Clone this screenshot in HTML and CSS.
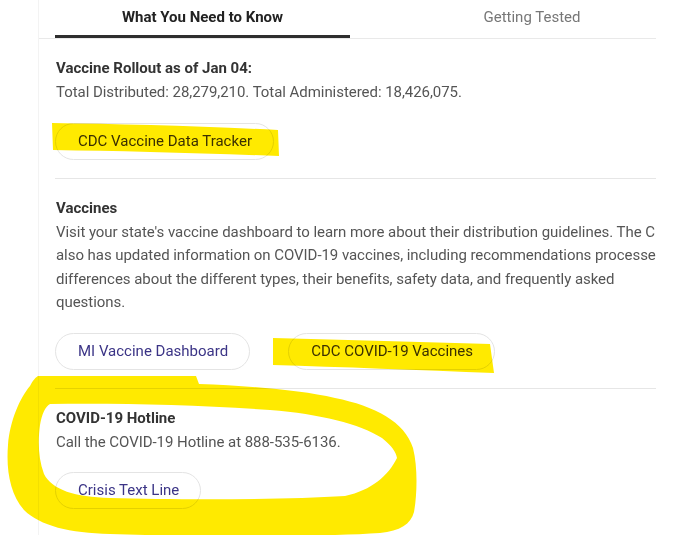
FILE: index.html
```html
<!DOCTYPE html>
<html lang="en">
<head>
<meta charset="utf-8">
<title>COVID-19 Info</title>
<link rel="stylesheet" href="styles.css">
</head>
<body>
<div class="page">
  <div class="card">
    <div class="tabs">
      <div class="tab active">What You Need to Know</div>
      <div class="tab muted">Getting Tested</div>
    </div>
    <section class="sec">
      <h3 class="title">Vaccine Rollout as of Jan 04:</h3>
      <p class="text">Total Distributed: 28,279,210. Total Administered: 18,426,075.</p>
      <div class="btns"><a class="pill">CDC Vaccine Data Tracker</a></div>
    </section>
    <section class="sec">
      <h3 class="title">Vaccines</h3>
      <p class="text">Visit your state's vaccine dashboard to learn more about their distribution guidelines. The CDC<br>also has updated information on COVID-19 vaccines, including recommendations processes and<br>differences about the different types, their benefits, safety data, and frequently asked<br>questions.</p>
      <div class="btns"><a class="pill">MI Vaccine Dashboard</a><a class="pill">CDC COVID-19 Vaccines</a></div>
    </section>
    <section class="sec last">
      <h3 class="title">COVID-19 Hotline</h3>
      <p class="text">Call the COVID-19 Hotline at 888-535-6136.</p>
      <div class="btns"><a class="pill">Crisis Text Line</a></div>
    </section>
  </div>
  <svg class="marker" width="673" height="535" viewBox="0 0 673 535" aria-hidden="true">
    <path fill="#ffea00" d="M52,123 C120,124 200,126 278,130 L279,156 C200,153 120,151 53,150 Z"/>
    <path fill="#ffea00" d="M273,338 C350,340 420,342 490,344 L494,373 C420,370 340,367 273,365 Z"/>
    <path fill="#ffea00" fill-rule="evenodd" d="M38,376 L196,376 L199,384 C250,386 300,390 335,398 C375,406 405,422 413,448 C418,468 417,495 414,512 C411,524 400,531 380,533 C320,537 200,537 110,534 C70,533 40,526 24,510 C10,494 6,470 8,445 C10,420 20,398 30,386 C33,380 36,377 38,376 Z M50,404 C120,403 200,405 270,410 C320,414 360,424 382,438 C392,446 396,452 397,458 C388,476 372,490 345,496 C280,500 180,500 110,498 C75,497 52,490 44,474 C38,458 38,440 40,425 C42,414 45,407 50,404 Z"/>
  </svg>
</div>
</body>
</html>
```
FILE: styles.css
```css
html, body {
  margin: 0;
  padding: 0;
  background: #ffffff;
}
body {
  font-family: Roboto, "Liberation Sans", Arial, sans-serif;
}
.page {
  position: relative;
  width: 673px;
  height: 535px;
  overflow: hidden;
}
.card {
  margin-left: 38px;
  width: 618px;
  height: 535px;
  box-sizing: border-box;
  border-left: 1px solid #f3f3f3;
  overflow: hidden;
}
.tabs {
  display: flex;
  height: 39px;
  width: 700px;
  box-sizing: border-box;
  border-bottom: 1px solid #e9e9e9;
}
.tab {
  flex: none;
  height: 38px;
  box-sizing: border-box;
  text-align: center;
  font-size: 15px;
  line-height: 34px;
}
.tab.active {
  margin-left: 16px;
  width: 295px;
  font-weight: 700;
  color: #222222;
  border-bottom: 3px solid #2e2e2e;
}
.tab.muted {
  width: 364px;
  color: #777777;
}
.sec {
  margin-left: 16px;
  width: 700px;
  padding: 17px 0 18px 0;
  border-bottom: 1px solid #e6e6e6;
}
.sec.last {
  border-bottom: none;
}
.title {
  margin: 0;
  padding-left: 1px;
  font-size: 15px;
  line-height: 24px;
  font-weight: 700;
  color: #333333;
}
.text {
  margin: 1px 0 0;
  padding-left: 1px;
  font-size: 15px;
  line-height: 23.5px;
  letter-spacing: -0.05px;
  color: #555555;
  white-space: nowrap;
}
.btns {
  display: flex;
  gap: 38px;
  margin-top: 18px;
}
.pill {
  display: block;
  height: 37px;
  box-sizing: border-box;
  padding: 0 21px 0 22px;
  border: 1px solid #e4e4e4;
  border-radius: 19px;
  background: #ffffff;
  font-size: 15px;
  line-height: 35px;
  color: #3b3486;
  text-decoration: none;
}
.marker {
  position: absolute;
  top: 0;
  left: 0;
  pointer-events: none;
  mix-blend-mode: multiply;
}
```
